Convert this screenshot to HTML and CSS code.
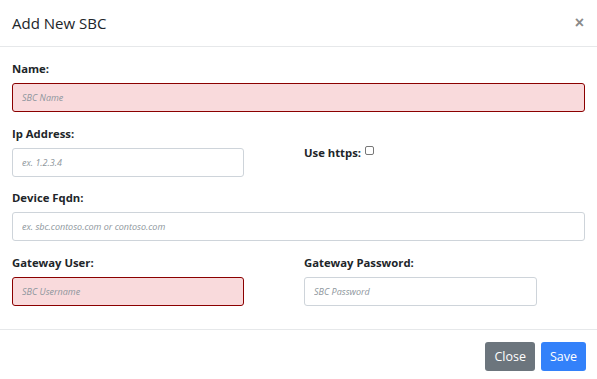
FILE: index.html
```html
<!DOCTYPE html>
<html lang="en">
<head>
    <meta charset="UTF-8">
    <meta name="viewport" content="width=device-width, initial-scale=1.0">
    <title>Add New SBC</title>
    <link rel="stylesheet" href="styles.css">
</head>
<body>
    <div class="modal">
        <div class="modal-header">
            <h5 class="modal-title">Add New SBC</h5>
            <button class="close" type="button">&times;</button>
        </div>
        <form class="modal-body">
            <div class="form-group full">
                <label for="name">Name:</label>
                <input id="name" class="invalid" type="text" placeholder="SBC Name">
            </div>
            <div class="form-group">
                <label for="ip">Ip Address:</label>
                <input id="ip" type="text" placeholder="ex. 1.2.3.4">
            </div>
            <div class="form-group https">
                <label for="https">Use https:</label>
                <span class="check" id="https"></span>
            </div>
            <div class="form-group full">
                <label for="fqdn">Device Fqdn:</label>
                <input id="fqdn" type="text" placeholder="ex. sbc.contoso.com or contoso.com">
            </div>
            <div class="form-group">
                <label for="user">Gateway User:</label>
                <input id="user" class="invalid" type="text" placeholder="SBC Username">
            </div>
            <div class="form-group">
                <label for="pass">Gateway Password:</label>
                <input id="pass" type="password" placeholder="SBC Password">
            </div>
        </form>
        <div class="modal-footer">
            <button class="btn btn-secondary" type="button">Close</button>
            <button class="btn btn-primary" type="button">Save</button>
        </div>
    </div>
</body>
</html>
```

FILE: styles.css
```css
body {
    margin: 0;
    font-family: "Open Sans", Arial, sans-serif;
    color: #212529;
    background-color: white;
}

.modal {
    width: 597px;
}

.modal-header {
    display: flex;
    justify-content: space-between;
    align-items: center;
    height: 46px;
    padding: 0 12px;
    border-bottom: 1px solid #e6e8ea;
}

.modal-title {
    margin: 0;
    font-size: 15px;
    font-weight: 400;
}

.close {
    border: none;
    background: none;
    padding: 0;
    margin-right: 1px;
    font-size: 16px;
    font-weight: 700;
    color: #8a8a8a;
    font-family: Arial, sans-serif;
}

.modal-body {
    display: grid;
    grid-template-columns: 232px 233px;
    column-gap: 60px;
    padding: 13px 12px 11px;
    margin: 0;
}

.form-group {
    display: flex;
    flex-direction: column;
    margin-bottom: 12.6px;
}

.form-group.full {
    grid-column: 1 / 3;
    width: 573px;
}

.form-group label {
    font-size: 11.3px;
    font-weight: 700;
    line-height: 18px;
    margin-bottom: 5px;
}

.form-group.https {
    flex-direction: row;
    align-items: center;
    align-self: start;
    margin-top: 19px;
}

.form-group.https label {
    margin: 0 4px 0 0;
}

.check {
    width: 7px;
    height: 7px;
    border: 1px solid #777;
    border-radius: 2px;
    margin-top: -4px;
}

input {
    box-sizing: border-box;
    height: 29px;
    padding: 0 9px;
    border: 1px solid #ced4da;
    border-radius: 3px;
    background: white;
    font-family: "Open Sans", Arial, sans-serif;
    font-size: 9px;
    outline: none;
}

input::placeholder {
    color: #8e969c;
    font-style: italic;
}

input.invalid {
    border-color: #8b0000;
    background-color: #f9dadc;
}

.modal-footer {
    display: flex;
    justify-content: flex-end;
    gap: 6px;
    padding: 12px 11px;
    border-top: 1px solid #e6e8ea;
}

.btn {
    height: 29px;
    padding: 0 9px;
    border: none;
    border-radius: 3px;
    color: white;
    font-family: "Open Sans", Arial, sans-serif;
    font-size: 12.5px;
}

.btn-secondary {
    background-color: #6c757d;
}

.btn-primary {
    background-color: #3381fa;
}
```
